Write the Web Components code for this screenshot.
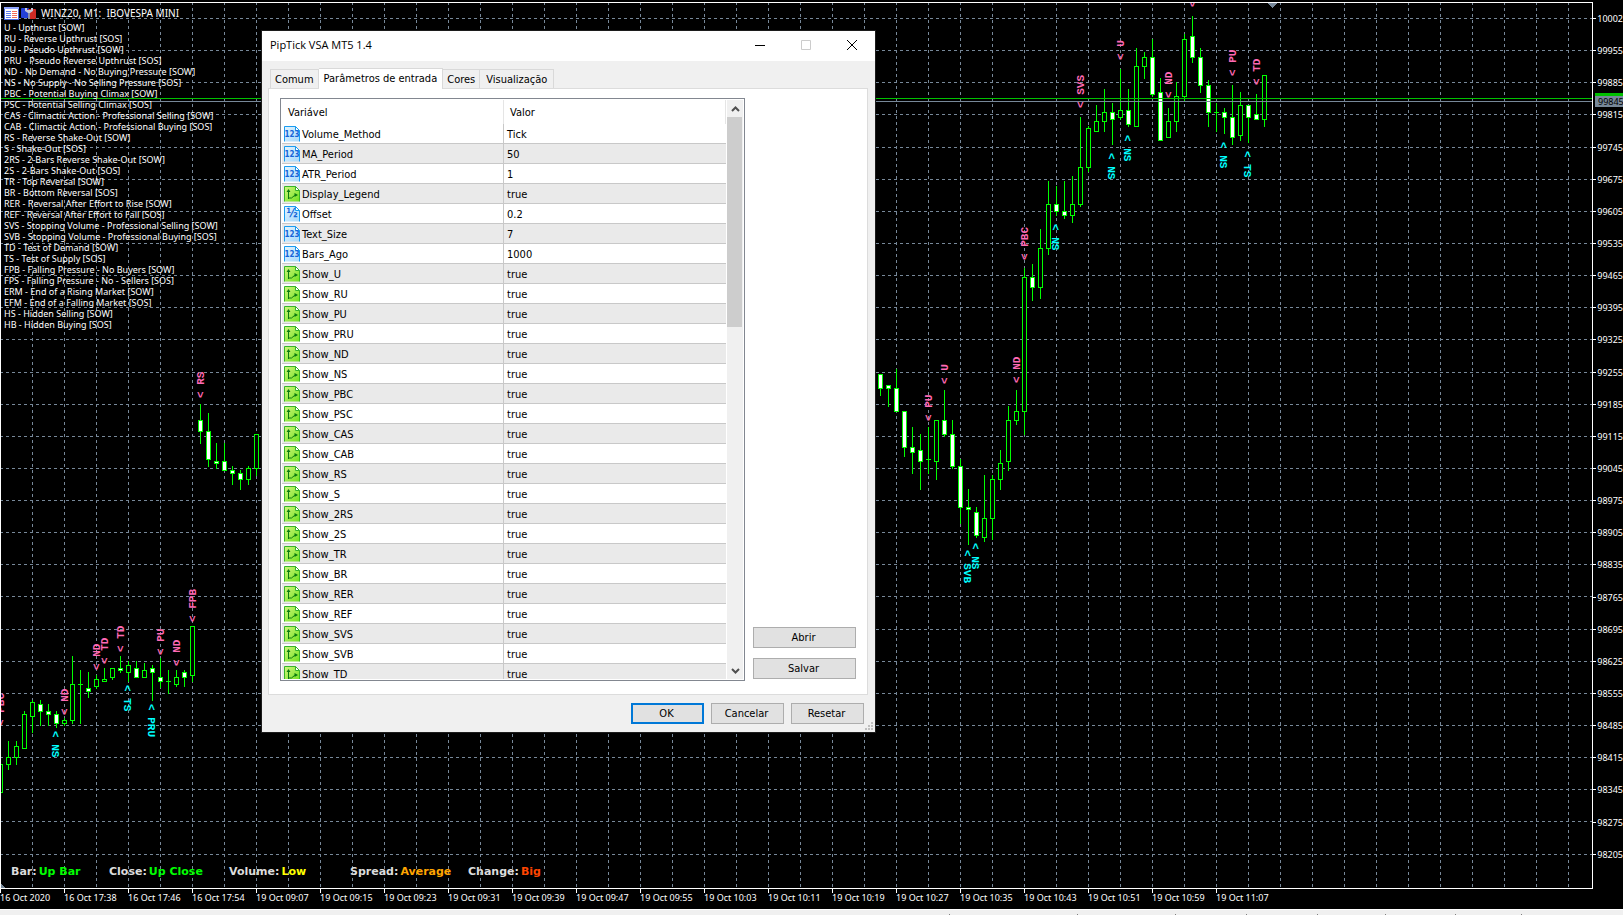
<!DOCTYPE html>
<html lang="pt-BR">
<head>
<meta charset="utf-8">
<meta name="viewport" content="width=device-width, initial-scale=1">
<title>WINZ20, M1: IBOVESPA MINI</title>
<style>
    html, body {
        height: 100%;
        margin: 0;
        background: #000;
        overflow: hidden;
    }
</style>
</head>
<body>
<trading-terminal>
    <price-chart slot="chart"></price-chart>
    <chart-legend slot="overlay" symbol="WINZ20, M1:&nbsp; IBOVESPA MINI"></chart-legend>
    <bar-status slot="status"></bar-status>
    <price-axis slot="prices" current="99845"></price-axis>
    <time-axis slot="times"></time-axis>
    <indicator-dialog slot="window" heading="PipTick VSA MT5 1.4">
        <param-table></param-table>
        <dialog-button slot="side">Abrir</dialog-button>
        <dialog-button slot="side">Salvar</dialog-button>
        <dialog-button slot="footer" primary>OK</dialog-button>
        <dialog-button slot="footer">Cancelar</dialog-button>
        <dialog-button slot="footer">Resetar</dialog-button>
    </indicator-dialog>
</trading-terminal>

<script>
const UI_FONT = '"DejaVu Sans Condensed", Tahoma, sans-serif';
const CHART_FONT = '"Noto Sans", Tahoma, sans-serif';

// y of the horizontal grid lines, one for each price label
const GRID_Y = [18, 50, 82, 114, 147, 179, 211, 243, 275, 307, 339, 372, 404, 436,
    468, 500, 532, 564, 596, 629, 661, 693, 725, 757, 789, 821, 854];

// bars by x: high, body top, body bottom, low, kind
// kind: u = up (hollow), d = down (filled), x = doji
const CANDLES = {
    0: [764, 764, 793, 793, 'u'], 8: [741, 757, 765, 770, 'u'], 16: [741, 746, 758, 765, 'u'],
    24: [711, 714, 749, 749, 'u'], 32: [700, 702, 717, 733, 'u'], 40: [700, 704, 712, 726, 'd'],
    48: [704, 711, 715, 726, 'd'], 56: [711, 714, 724, 728, 'd'], 64: [718, 720, 724, 726, 'u'],
    72: [656, 684, 721, 724, 'u'], 80: [670, 684, 685, 724, 'x'], 88: [672, 688, 692, 698, 'd'],
    96: [675, 679, 687, 689, 'u'], 104: [668, 679, 682, 682, 'u'], 112: [668, 668, 678, 680, 'u'],
    120: [656, 668, 671, 673, 'd'], 128: [661, 665, 673, 682, 'u'], 136: [661, 668, 678, 678, 'd'],
    144: [663, 670, 678, 678, 'u'], 152: [665, 668, 673, 701, 'd'], 160: [658, 677, 682, 688, 'd'],
    168: [670, 681, 682, 694, 'x'], 176: [670, 677, 685, 687, 'u'], 184: [670, 672, 678, 687, 'd'],
    192: [626, 626, 676, 682, 'u'], 200: [404, 420, 432, 444, 'd'], 208: [413, 431, 460, 467, 'd'],
    216: [443, 461, 464, 469, 'd'], 224: [443, 461, 471, 471, 'd'], 232: [466, 470, 474, 485, 'd'],
    240: [470, 473, 480, 490, 'd'], 248: [466, 468, 480, 485, 'u'], 256: [434, 434, 469, 476, 'u'],
    880: [374, 374, 389, 396, 'd'], 888: [385, 385, 389, 407, 'd'], 896: [369, 388, 412, 412, 'd'],
    904: [411, 411, 448, 457, 'd'], 912: [427, 447, 453, 474, 'd'], 920: [434, 450, 462, 490, 'd'],
    928: [427, 459, 460, 474, 'x'], 936: [420, 420, 462, 480, 'u'], 944: [390, 420, 435, 437, 'd'],
    952: [420, 434, 467, 469, 'd'], 960: [459, 466, 508, 524, 'd'], 968: [489, 507, 510, 545, 'd'],
    976: [507, 512, 536, 538, 'd'], 984: [475, 518, 538, 542, 'u'], 992: [475, 479, 519, 540, 'u'],
    1000: [450, 463, 480, 490, 'u'], 1008: [406, 420, 462, 471, 'u'], 1016: [390, 411, 421, 425, 'u'],
    1024: [268, 277, 412, 435, 'u'], 1032: [264, 277, 288, 301, 'd'], 1040: [229, 248, 288, 299, 'u'],
    1048: [181, 204, 249, 255, 'u'], 1056: [186, 204, 212, 216, 'd'], 1064: [181, 211, 216, 219, 'd'],
    1072: [176, 204, 216, 223, 'u'], 1080: [117, 167, 205, 207, 'u'], 1088: [126, 128, 168, 172, 'u'],
    1096: [105, 121, 132, 132, 'u'], 1104: [89, 112, 122, 132, 'u'], 1112: [103, 112, 120, 145, 'd'],
    1120: [69, 110, 118, 120, 'u'], 1128: [89, 110, 125, 127, 'd'], 1136: [48, 66, 127, 127, 'u'],
    1144: [52, 57, 67, 79, 'u'], 1152: [39, 57, 95, 97, 'd'], 1160: [78, 92, 141, 141, 'd'],
    1168: [108, 121, 138, 138, 'u'], 1176: [82, 96, 122, 132, 'u'], 1184: [34, 39, 97, 101, 'u'],
    1192: [16, 36, 58, 63, 'd'], 1200: [48, 57, 86, 93, 'd'], 1208: [80, 85, 113, 127, 'd'],
    1216: [103, 112, 113, 132, 'x'], 1224: [108, 112, 118, 134, 'd'], 1232: [85, 117, 138, 145, 'd'],
    1240: [92, 105, 136, 141, 'u'], 1248: [105, 105, 118, 143, 'd'], 1256: [94, 114, 120, 120, 'd'],
    1264: [75, 75, 120, 127, 'u']
};

// weakness signals sit above the bar and read upwards
const SOW = [[0, 726, 'PBC'], [64, 715, 'ND'], [96, 670, 'ND'], [104, 664, 'TD'], [120, 652, 'TD'],
    [160, 655, 'PU'], [176, 666, 'ND'], [192, 622, 'FPB'], [200, 398, 'RS'], [928, 421, 'PU'],
    [944, 384, 'U'], [1016, 383, 'ND'], [1024, 260, 'PBC'], [1080, 108, 'SVS'], [1120, 60, 'U'],
    [1168, 98, 'ND'], [1192, 7, ''], [1232, 76, 'PU'], [1256, 85, 'TD']];

// strength signals sit below the bar and read downwards
const SOS = [[56, 731, 'NS'], [128, 685, 'TS'], [152, 704, 'PRU'], [968, 550, 'SVB'], [976, 543, 'NS'],
    [1056, 224, 'NS'], [1112, 153, 'NS'], [1128, 135, 'NS'], [1224, 142, 'NS'], [1248, 151, 'TS']];

class TradingTerminal extends HTMLElement {
    constructor() {
        super();
        this.attachShadow({ mode: 'open' });
        this.shadowRoot.innerHTML = `
            <style>
                :host {
                    display: flex;
                    flex-direction: column;
                    box-sizing: border-box;
                    height: 100vh;
                    padding-top: 2px;
                    position: relative;
                    color: #fff;
                    overflow: hidden;
                }

                .main {
                    flex: 1;
                    min-height: 0;
                    display: flex;
                }

                .plot {
                    flex: 1;
                    min-width: 0;
                    position: relative;
                    border: 1px solid #fff;
                    overflow: hidden;
                }

                .over {
                    position: absolute;
                    top: 0;
                    left: 0;
                }

                .bottom {
                    position: absolute;
                    left: 0;
                    bottom: 0;
                }

                .tabs {
                    height: 6px;
                    background: #f0f0f0;
                    border-top: 1px solid #fff;
                    box-sizing: border-box;
                }

                .tabs svg {
                    display: block;
                }
            </style>
            <div class="main">
                <div class="plot">
                    <slot name="chart"></slot>
                    <div class="over"><slot name="overlay"></slot></div>
                    <div class="bottom"><slot name="status"></slot></div>
                </div>
                <slot name="prices"></slot>
            </div>
            <slot name="times"></slot>
            <div class="tabs">
                <svg width="100%" height="5" fill="#808080">
                    ${[949, 1077, 1175, 1246, 1317, 1385, 1455, 1521].map(x => `<rect x="${x}" y="4" width="1" height="1"/>`).join('')}
                </svg>
            </div>
            <slot name="window"></slot>
        `;
    }
}

class PriceChart extends HTMLElement {
    constructor() {
        super();
        this.attachShadow({ mode: 'open' });
    }

    connectedCallback() {
        this.render();
    }

    grid() {
        let lines = '';
        for (let x = 32; x < 1592; x += 32) {
            lines += `<line x1="${x + 0.5}" x2="${x + 0.5}" y1="2" y2="888"/>`;
        }
        for (const y of GRID_Y) {
            lines += `<line x1="0" x2="1592" y1="${y + 0.5}" y2="${y + 0.5}"/>`;
        }
        return lines;
    }

    candle(x, [high, top, bottom, low, kind]) {
        const wick = (a, b) => b > a ? `<rect x="${x}" y="${a}" width="1" height="${b - a}" fill="#0f0"/>` : '';
        if (kind === 'x') {
            return wick(high, low) + `<rect x="${x - 2}" y="${top}" width="5" height="1" fill="#0f0"/>`;
        }
        const fill = kind === 'd' ? '#fff' : '#000';
        return wick(high, top) + wick(bottom, low) +
            `<rect x="${x - 1.5}" y="${top + 0.5}" width="4" height="${bottom - top - 1}" fill="${fill}" stroke="#0f0"/>`;
    }

    render() {
        const candles = Object.keys(CANDLES).map(x => this.candle(Number(x), CANDLES[x])).join('');
        const sow = SOW.map(([x, y, t]) =>
            `<text transform="translate(${x + 4} ${y}) rotate(-90)">&lt; ${t}</text>`).join('');
        const sos = SOS.map(([x, y, t]) =>
            `<text transform="translate(${x - 4} ${y}) rotate(90)">&lt; ${t}</text>`).join('');

        this.shadowRoot.innerHTML = `
            <style>
                :host {
                    display: block;
                    height: 100%;
                }

                svg {
                    display: block;
                    width: 100%;
                    height: 100%;
                }

                text {
                    font: bold 11px "Liberation Mono", "Courier New", monospace;
                    white-space: pre;
                }
            </style>
            <svg>
                <g transform="translate(-1 -3)" shape-rendering="crispEdges">
                    <g stroke="#778899" stroke-dasharray="3 3">${this.grid()}</g>
                    ${candles}
                    <rect x="0" y="98" width="1600" height="1" fill="#00c000"/>
                    <rect x="0" y="101" width="1600" height="1" fill="#778899"/>
                    <path d="M1267 3h10l-5 5z" fill="#778899"/>
                    <path d="M1 883v5h4z" fill="#778899"/>
                    <g fill="#ff69b4">${sow}</g>
                    <g fill="#00ffff">${sos}</g>
                </g>
            </svg>
        `;
    }
}

class ChartLegend extends HTMLElement {
    constructor() {
        super();
        this.attachShadow({ mode: 'open' });
    }

    connectedCallback() {
        const lines = [
            'U - Upthrust [SOW]',
            'RU - Reverse Upthrust [SOS]',
            'PU - Pseudo Upthrust [SOW]',
            'PRU - Pseudo Reverse Upthrust [SOS]',
            'ND - No Demand - No Buying Pressure [SOW]',
            'NS - No Supply - No Selling Pressure [SOS]',
            'PBC - Potential Buying Climax [SOW]',
            'PSC - Potential Selling Climax [SOS]',
            'CAS - Climactic Action - Professional Selling [SOW]',
            'CAB - Climactic Action - Professional Buying [SOS]',
            'RS - Reverse Shake-Out [SOW]',
            'S - Shake-Out [SOS]',
            '2RS - 2-Bars Reverse Shake-Out [SOW]',
            '2S - 2-Bars Shake-Out [SOS]',
            'TR - Top Reversal [SOW]',
            'BR - Bottom Reversal [SOS]',
            'RER - Reversal After Effort to Rise [SOW]',
            'REF - Reversal After Effort to Fall [SOS]',
            'SVS - Stopping Volume - Professional Selling [SOW]',
            'SVB - Stopping Volume - Professional Buying [SOS]',
            'TD - Test of Demand [SOW]',
            'TS - Test of Supply [SOS]',
            'FPB - Falling Pressure - No Buyers [SOW]',
            'FPS - Falling Pressure - No - Sellers [SOS]',
            'ERM - End of a Rising Market [SOW]',
            'EFM - End of a Falling Market [SOS]',
            'HS - Hidden Selling [SOW]',
            'HB - Hidden Buying [SOS]'
        ];

        this.shadowRoot.innerHTML = `
            <style>
                :host {
                    display: block;
                    padding: 2px 0 0 3px;
                    font: 9px/11px ${CHART_FONT};
                    white-space: nowrap;
                }

                header {
                    display: flex;
                    align-items: center;
                    gap: 2px;
                    height: 16px;
                    font-size: 10px;
                }

                header span {
                    margin-left: 3px;
                }

                ul {
                    list-style: none;
                    margin: 1px 0 0;
                    padding: 0;
                }
            </style>
            <header>
                <svg width="15" height="13" shape-rendering="crispEdges">
                    <rect width="15" height="13" fill="#4a6ae0"/>
                    <rect width="15" height="2" fill="#8fa6ff"/>
                    <rect x="1" y="2" width="13" height="10" fill="#fff"/>
                    <path d="M2 4.500h5M2 6.500h5M2 8.500h5M2 10.500h5" stroke="#5f7df0"/>
                    <path d="M8 4.500h5M8 6.500h5M8 8.500h5M8 10.500h5" stroke="#f26a5a"/>
                </svg>
                <svg width="15" height="13">
                    <rect y="1" width="8" height="10" rx="1" fill="#2341d8"/>
                    <rect x="7" y="2" width="8" height="10" rx="1" fill="#cf2b25"/>
                    <path d="M4 1h2v2h4V1h2v3l-3 2H7L4 4z" fill="#c4c8d8"/>
                    <path d="M7 6h2v6H7z" fill="#8890a8"/>
                </svg>
                <span>${this.getAttribute('symbol')}</span>
            </header>
            <ul>${lines.map(line => `<li>${line}</li>`).join('')}</ul>
        `;
    }
}

class BarStatus extends HTMLElement {
    constructor() {
        super();
        this.attachShadow({ mode: 'open' });
        this.shadowRoot.innerHTML = `
            <style>
                :host {
                    display: block;
                    padding: 0 0 8px 10px;
                    font: bold 11px/16px "DejaVu Sans", Verdana, sans-serif;
                    color: #dcdcdc;
                    white-space: nowrap;
                }

                dl {
                    display: grid;
                    grid-template-columns: 98px 120px 121px 118px auto;
                    margin: 0;
                }

                div {
                    display: flex;
                    gap: 2px;
                }

                dd {
                    margin: 0;
                }

                .green { color: #0f0; }
                .yellow { color: #ff0; }
                .orange { color: #ffa500; }
                .red { color: #ff4500; }
            </style>
            <dl>
                <div><dt>Bar:</dt><dd class="green">Up Bar</dd></div>
                <div><dt>Close:</dt><dd class="green">Up Close</dd></div>
                <div><dt>Volume:</dt><dd class="yellow">Low</dd></div>
                <div><dt>Spread:</dt><dd class="orange">Average</dd></div>
                <div><dt>Change:</dt><dd class="red">Big</dd></div>
            </dl>
        `;
    }
}

class PriceAxis extends HTMLElement {
    constructor() {
        super();
        this.attachShadow({ mode: 'open' });
    }

    connectedCallback() {
        const labels = ['10002'];
        for (let price = 99955; price >= 98205; price -= 70) {
            labels.push(price);
        }

        this.shadowRoot.innerHTML = `
            <style>
                :host {
                    display: flex;
                    flex-direction: column;
                    justify-content: space-between;
                    box-sizing: border-box;
                    width: 30px;
                    padding: 11px 0 29px;
                    position: relative;
                    font: 9px/11px ${CHART_FONT};
                    overflow: hidden;
                }

                div {
                    display: flex;
                    align-items: center;
                    gap: 1px;
                }

                div::before {
                    content: "";
                    width: 4px;
                    height: 1px;
                    background: #fff;
                }

                output {
                    position: absolute;
                    top: 91px;
                    left: 2px;
                    right: 0;
                    padding-left: 3px;
                    border-top: 3px solid #00c000;
                    background: #778899;
                    color: #000;
                }
            </style>
            ${labels.map(label => `<div>${label}</div>`).join('')}
            <output>${this.getAttribute('current')}</output>
        `;
    }
}

class TimeAxis extends HTMLElement {
    constructor() {
        super();
        this.attachShadow({ mode: 'open' });
        const times = ['16 Oct 2020', '16 Oct 17:38', '16 Oct 17:46', '16 Oct 17:54', '19 Oct 09:07',
            '19 Oct 09:15', '19 Oct 09:23', '19 Oct 09:31', '19 Oct 09:39', '19 Oct 09:47',
            '19 Oct 09:55', '19 Oct 10:03', '19 Oct 10:11', '19 Oct 10:19', '19 Oct 10:27',
            '19 Oct 10:35', '19 Oct 10:43', '19 Oct 10:51', '19 Oct 10:59', '19 Oct 11:07'];
        this.shadowRoot.innerHTML = `
            <style>
                :host {
                    display: flex;
                    height: 20px;
                    font: 9px/9px ${CHART_FONT};
                    white-space: nowrap;
                }

                time {
                    flex: none;
                    width: 64px;
                }

                time::before {
                    content: "";
                    display: block;
                    width: 1px;
                    height: 4px;
                    background: #fff;
                }
            </style>
            ${times.map(time => `<time>${time}</time>`).join('')}
        `;
    }
}

class IndicatorDialog extends HTMLElement {
    constructor() {
        super();
        this.attachShadow({ mode: 'open' });
    }

    connectedCallback() {
        this.shadowRoot.innerHTML = `
            <style>
                :host {
                    display: block;
                    position: absolute;
                    top: 31px;
                    left: 262px;
                    width: 613px;
                    background: #f0f0f0;
                    color: #000;
                    font: 11px/14px ${UI_FONT};
                    box-shadow: 0 0 0 1px #1c1c1c;
                }

                header {
                    display: flex;
                    align-items: center;
                    height: 30px;
                    background: #fff;
                }

                h1 {
                    flex: 1;
                    margin: 0;
                    padding: 0 0 2px 8px;
                    font: 11px/16px "Open Sans", "Segoe UI", sans-serif;
                }

                button {
                    border: 0;
                    padding: 0;
                    background: none;
                    font: inherit;
                    color: inherit;
                }

                header button {
                    width: 46px;
                    height: 28px;
                    margin-bottom: 2px;
                    display: grid;
                    place-items: center;
                }

                nav {
                    display: flex;
                    align-items: flex-end;
                    height: 27px;
                    padding-left: 8px;
                }

                nav button {
                    height: 19px;
                    padding: 2px 4px 0;
                    border: 1px solid #d9d9d9;
                    border-bottom: 0;
                    border-left: 0;
                    white-space: nowrap;
                }

                nav button:first-child {
                    border-left: 1px solid #d9d9d9;
                }

                nav button:last-child {
                    padding: 2px 6px 0;
                }

                nav button[aria-selected="true"] {
                    height: 21px;
                    padding: 0 5px 1px;
                    margin-bottom: -1px;
                    background: #fff;
                    position: relative;
                }

                .panel {
                    display: flex;
                    gap: 8px;
                    margin: 0 7px 0 6px;
                    padding: 9px 11px 13px;
                    border: 1px solid #dcdcdc;
                    background: #fff;
                }

                .content {
                    flex: 1;
                    min-width: 0;
                }

                .side {
                    display: flex;
                    flex-direction: column;
                    justify-content: flex-end;
                    gap: 10px;
                    width: 103px;
                    padding-bottom: 2px;
                }

                footer {
                    display: flex;
                    justify-content: flex-end;
                    gap: 7px;
                    padding: 8px 11px;
                }

                ::slotted([slot="footer"]) {
                    width: 73px;
                }

                .grip {
                    position: absolute;
                    right: 2px;
                    bottom: 2px;
                }
            </style>
            <header>
                <h1>${this.getAttribute('heading')}</h1>
                <button aria-label="Minimizar"><svg width="11" height="11"><path d="M0 5.500h10" stroke="#000"/></svg></button>
                <button aria-label="Maximizar" disabled><svg width="11" height="11"><path d="M.5.5h9v9h-9z" fill="none" stroke="#ccc"/></svg></button>
                <button aria-label="Fechar"><svg width="11" height="11"><path d="M0 0l10 10M10 0L0 10" stroke="#000"/></svg></button>
            </header>
            <nav role="tablist">
                <button role="tab">Comum</button>
                <button role="tab" aria-selected="true">Parâmetros de entrada</button>
                <button role="tab">Cores</button>
                <button role="tab">Visualização</button>
            </nav>
            <div class="panel">
                <div class="content"><slot></slot></div>
                <div class="side"><slot name="side"></slot></div>
            </div>
            <footer><slot name="footer"></slot></footer>
            <svg class="grip" width="8" height="8" fill="#bfbfbf" shape-rendering="crispEdges">
                <path d="M6 0h2v2h-2zM3 3h2v2h-2zM6 3h2v2h-2zM0 6h2v2h-2zM3 6h2v2h-2zM6 6h2v2h-2z"/>
            </svg>
        `;
    }
}

class DialogButton extends HTMLElement {
    constructor() {
        super();
        this.attachShadow({ mode: 'open' });
        this.shadowRoot.innerHTML = `
            <style>
                :host {
                    display: block;
                }

                button {
                    display: block;
                    box-sizing: border-box;
                    width: 100%;
                    height: 21px;
                    padding: 1px 2px 0 0;
                    border: 1px solid #adadad;
                    background: #e1e1e1;
                    color: #000;
                    font: inherit;
                }

                :host([primary]) button {
                    border: 2px solid #0078d7;
                }
            </style>
            <button><slot></slot></button>
        `;
    }
}

class ParamIcon extends HTMLElement {
    constructor() {
        super();
        this.attachShadow({ mode: 'open' });
    }

    connectedCallback() {
        const kind = this.getAttribute('kind');
        const green = kind === 'bool';
        const line = green ? '#35b52a' : '#1a9cf0';
        const art = green
            ? '<path d="M4.500 13V5M4.500 12h3l3-2.500h1" fill="none" stroke="#0a7a10"/><path d="M4.500 3L2.500 6h4zM14 9l-3.500-2v4z" fill="#0a7a10"/>'
            : `<text x="8" y="11" text-anchor="middle">${kind === 'double' ? '½' : '123'}</text>`;

        this.shadowRoot.innerHTML = `
            <style>
                :host {
                    display: block;
                    width: 16px;
                    height: 16px;
                }

                svg {
                    display: block;
                }

                text {
                    font: bold ${kind === 'double' ? 12 : 8}px "DejaVu Sans Condensed", sans-serif;
                    fill: #1565d8;
                }
            </style>
            <svg width="16" height="16">
                <defs>
                    <linearGradient id="paper" x1="0" y1="0" x2="1" y2="1">
                        <stop offset="0" stop-color="${green ? '#d2f77e' : '#e4f5ff'}"/>
                        <stop offset="1" stop-color="${green ? '#6fe01e' : '#a5d8fb'}"/>
                    </linearGradient>
                </defs>
                <path d="M.5 15.500V.5h11l4 4v11" fill="url(#paper)" stroke="${line}"/>
                <path d="M11.500.5v4h4z" fill="#fff" stroke="${line}"/>
                ${art}
            </svg>
        `;
    }
}

class ParamTable extends HTMLElement {
    constructor() {
        super();
        this.attachShadow({ mode: 'open' });
        this._params = [
            ['int', 'Volume_Method', 'Tick'],
            ['int', 'MA_Period', '50'],
            ['int', 'ATR_Period', '1'],
            ['bool', 'Display_Legend', 'true'],
            ['double', 'Offset', '0.2'],
            ['int', 'Text_Size', '7'],
            ['int', 'Bars_Ago', '1000']
        ];
        const signals = ['U', 'RU', 'PU', 'PRU', 'ND', 'NS', 'PBC', 'PSC', 'CAS', 'CAB', 'RS', 'S',
            '2RS', '2S', 'TR', 'BR', 'RER', 'REF', 'SVS', 'SVB', 'TD'];
        for (const signal of signals) {
            this._params.push(['bool', 'Show_' + signal, 'true']);
        }
    }

    connectedCallback() {
        const rows = this._params.map(([kind, name, value]) => `
            <tr>
                <td><div class="name"><param-icon kind="${kind}"></param-icon><span>${name}</span></div></td>
                <td>${value}</td>
            </tr>`).join('');

        this.shadowRoot.innerHTML = `
            <style>
                :host {
                    display: flex;
                    gap: 1px;
                    height: 579px;
                    padding: 1px;
                    border: 1px solid #828790;
                }

                .view {
                    flex: 1;
                    overflow: hidden;
                }

                table {
                    width: 100%;
                    border-collapse: separate;
                    border-spacing: 0;
                    table-layout: fixed;
                }

                th, td {
                    box-sizing: border-box;
                    padding: 2px 0 0 3px;
                    text-align: left;
                    font-weight: normal;
                }

                th {
                    height: 24px;
                    padding-left: 6px;
                    border-right: 1px solid #e5e5e5;
                }

                td {
                    height: 20px;
                    border-bottom: 1px solid #c8c8c8;
                }

                td:first-child {
                    padding: 0 0 0 2px;
                    border-right: 1px solid #c8c8c8;
                }

                tr:nth-child(even) td {
                    background: #eaeaea;
                }

                .name {
                    display: flex;
                    align-items: center;
                    gap: 2px;
                }

                .name span {
                    padding-top: 2px;
                }

                .scroll {
                    display: flex;
                    flex-direction: column;
                    width: 16px;
                    background: #f0f0f0;
                }

                .scroll button {
                    display: grid;
                    place-items: center;
                    height: 17px;
                    padding: 0;
                    border: 0;
                    background: none;
                }

                .track {
                    flex: 1;
                }

                .thumb {
                    width: 15px;
                    height: 210px;
                    background: #cdcdcd;
                }
            </style>
            <div class="view">
                <table>
                    <thead><tr><th>Variável</th><th>Valor</th></tr></thead>
                    <tbody>${rows}</tbody>
                </table>
            </div>
            <div class="scroll">
                <button aria-label="Rolar para cima"><svg width="9" height="6"><path d="M1 5l3.500-3.500L8 5" fill="none" stroke="#505050" stroke-width="2"/></svg></button>
                <div class="track"><div class="thumb"></div></div>
                <button aria-label="Rolar para baixo"><svg width="9" height="6"><path d="M1 1l3.500 3.500L8 1" fill="none" stroke="#505050" stroke-width="2"/></svg></button>
            </div>
        `;
    }
}

customElements.define('trading-terminal', TradingTerminal);
customElements.define('price-chart', PriceChart);
customElements.define('chart-legend', ChartLegend);
customElements.define('bar-status', BarStatus);
customElements.define('price-axis', PriceAxis);
customElements.define('time-axis', TimeAxis);
customElements.define('indicator-dialog', IndicatorDialog);
customElements.define('dialog-button', DialogButton);
customElements.define('param-icon', ParamIcon);
customElements.define('param-table', ParamTable);
</script>
</body>
</html>
